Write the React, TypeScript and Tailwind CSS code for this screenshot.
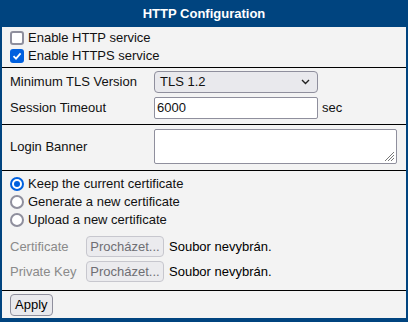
import React from 'react';

const font = { fontFamily: '"Liberation Sans", Arial, sans-serif' };

const Check: React.FC<{ checked?: boolean }> = ({ checked }) =>
  checked ? (
    <span className="flex h-[14px] w-[14px] items-center justify-center rounded-[3px] bg-[#0060df]">
      <svg width="10" height="10" viewBox="0 0 10 10">
        <path d="M1.5 5.2 L4 7.6 L8.6 2.4" fill="none" stroke="#fff" strokeWidth="1.8" />
      </svg>
    </span>
  ) : (
    <span className="h-[14px] w-[14px] rounded-[3px] border-2 border-[#8f8f9d] bg-white" />
  );

const Radio: React.FC<{ checked?: boolean }> = ({ checked }) =>
  checked ? (
    <span className="flex h-[14px] w-[14px] items-center justify-center rounded-full border-2 border-[#0060df] bg-white">
      <span className="h-[6px] w-[6px] rounded-full bg-[#0060df]" />
    </span>
  ) : (
    <span className="h-[14px] w-[14px] rounded-full border-2 border-[#8f8f9d] bg-white" />
  );

const Divider = () => <div className="h-px shrink-0 bg-black" />;

const FileRow: React.FC<{ label: string }> = ({ label }) => (
  <div className="flex h-[25px] items-center">
    <span className="w-[76px] text-[#8a8a8a]">{label}</span>
    <span className="flex h-[21px] w-[78px] items-center justify-center rounded-[4px] border border-[#c7c7ce] bg-[#ebebee] text-[#6e6e73]">
      Procházet...
    </span>
    <span className="ml-[5px] text-black">Soubor nevybrán.</span>
  </div>
);

export default function App() {
  return (
    <div
      className="flex h-[322px] w-[408px] flex-col border-x-2 border-b-4 border-[#00447f] bg-[#f3f3f3] text-[13px] text-[#111]"
      style={font}
    >
      {/* header */}
      <div className="-mx-[2px] flex h-[27px] shrink-0 items-center justify-center bg-[#00447f] font-bold text-white">
        HTTP Configuration
      </div>

      {/* services */}
      <div className="flex h-[40px] flex-col px-[8px] pt-[2px]">
        <label className="flex h-[18px] items-center gap-[4px]">
          <Check />
          <span>Enable HTTP service</span>
        </label>
        <label className="flex h-[18px] items-center gap-[4px]">
          <Check checked />
          <span>Enable HTTPS service</span>
        </label>
      </div>
      <Divider />

      {/* tls */}
      <div className="flex h-[56px] flex-col px-[8px] pt-[1px]">
        <div className="flex h-[26px] items-center">
          <span className="w-[144px]">Minimum TLS Version</span>
          <div className="flex h-[22px] w-[164px] items-center justify-between rounded-[4px] border border-[#8f8f9d] bg-[#e9e9ed] pl-[5px] pr-[7px]">
            <span>TLS 1.2</span>
            <svg width="9" height="6" viewBox="0 0 9 6">
              <path d="M1 1 L4.5 4.5 L8 1" fill="none" stroke="#222" strokeWidth="1.4" />
            </svg>
          </div>
        </div>
        <div className="flex h-[26px] items-center">
          <span className="w-[144px]">Session Timeout</span>
          <div className="flex h-[22px] w-[164px] items-center rounded-[2px] border border-[#8f8f9d] bg-white px-[2px]">
            6000
          </div>
          <span className="ml-[4px]">sec</span>
        </div>
      </div>
      <Divider />

      {/* banner */}
      <div className="flex h-[45px] items-start px-[8px] pt-[4px]">
        <span className="flex h-[35px] w-[144px] items-center">Login Banner</span>
        <div className="relative h-[35px] w-[243px] rounded-[2px] border border-[#8f8f9d] bg-white">
          <svg className="absolute bottom-[1px] right-[1px]" width="12" height="12" viewBox="0 0 12 12">
            <path d="M11 2 L2 11 M11 5 L5 11 M11 8 L8 11" stroke="#777" strokeWidth="1" />
          </svg>
        </div>
      </div>
      <Divider />

      {/* certificate */}
      <div className="flex h-[119px] flex-col px-[8px] pt-[4px]">
        <label className="flex h-[18px] items-center gap-[4px]">
          <Radio checked />
          <span>Keep the current certificate</span>
        </label>
        <label className="flex h-[18px] items-center gap-[4px]">
          <Radio />
          <span>Generate a new certificate</span>
        </label>
        <label className="flex h-[18px] items-center gap-[4px]">
          <Radio />
          <span>Upload a new certificate</span>
        </label>
        <div className="h-[5px]" />
        <FileRow label="Certificate" />
        <FileRow label="Private Key" />
      </div>
      <Divider />

      {/* apply */}
      <div className="flex flex-1 items-center px-[8px]">
        <button className="flex h-[22px] items-center rounded-[4px] border border-[#8f8f9d] bg-[#e9e9ed] px-[4px] text-black">
          Apply
        </button>
      </div>
    </div>
  );
}
